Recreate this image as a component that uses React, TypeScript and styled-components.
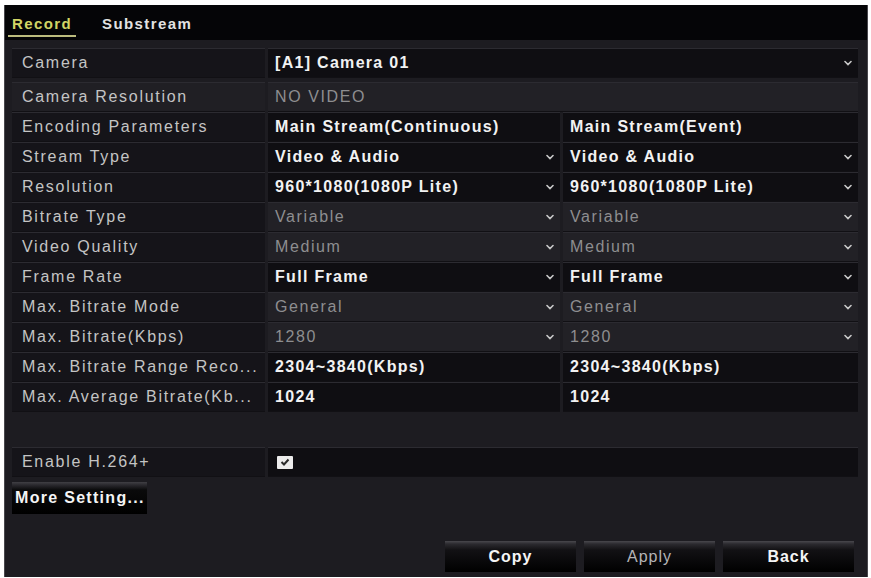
import React from "react";
import styled, { createGlobalStyle } from "styled-components";

const GlobalStyle = createGlobalStyle`
  html, body {
    margin: 0;
    padding: 0;
    background: #ffffff;
  }
  body {
    font-family: "Liberation Sans", Arial, sans-serif;
  }
`;

type Value = { text: string; dropdown?: boolean; muted?: boolean; bold?: boolean };
type Row = { label: string; values: Value[]; span?: boolean; dim?: boolean };

const rows: Row[] = [
  { label: "Camera Resolution", values: [{ text: "NO VIDEO", muted: true }], span: true, dim: true },
  {
    label: "Encoding Parameters",
    values: [{ text: "Main Stream(Continuous)", bold: true }, { text: "Main Stream(Event)", bold: true }],
  },
  {
    label: "Stream Type",
    values: [
      { text: "Video & Audio", bold: true, dropdown: true },
      { text: "Video & Audio", bold: true, dropdown: true },
    ],
  },
  {
    label: "Resolution",
    values: [
      { text: "960*1080(1080P Lite)", bold: true, dropdown: true },
      { text: "960*1080(1080P Lite)", bold: true, dropdown: true },
    ],
  },
  {
    label: "Bitrate Type",
    values: [
      { text: "Variable", muted: true, dropdown: true },
      { text: "Variable", muted: true, dropdown: true },
    ],
  },
  {
    label: "Video Quality",
    values: [
      { text: "Medium", muted: true, dropdown: true },
      { text: "Medium", muted: true, dropdown: true },
    ],
  },
  {
    label: "Frame Rate",
    values: [
      { text: "Full Frame", bold: true, dropdown: true },
      { text: "Full Frame", bold: true, dropdown: true },
    ],
  },
  {
    label: "Max. Bitrate Mode",
    values: [
      { text: "General", muted: true, dropdown: true },
      { text: "General", muted: true, dropdown: true },
    ],
  },
  {
    label: "Max. Bitrate(Kbps)",
    values: [
      { text: "1280", muted: true, dropdown: true },
      { text: "1280", muted: true, dropdown: true },
    ],
  },
  {
    label: "Max. Bitrate Range Reco...",
    values: [{ text: "2304~3840(Kbps)", bold: true }, { text: "2304~3840(Kbps)", bold: true }],
  },
  {
    label: "Max. Average Bitrate(Kb...",
    values: [{ text: "1024", bold: true }, { text: "1024", bold: true }],
  },
];

const Panel = styled.div`
  box-sizing: border-box;
  margin: 5px 4px 0 4px;
  width: 864px;
  height: 572px;
  background: #1d1c21;
  border-left: 1px solid #48474c;
  border-right: 1px solid #48474c;
  display: flex;
  flex-direction: column;
`;

const TabBar = styled.div`
  height: 35px;
  background: #050507;
  display: flex;
  align-items: flex-start;
  gap: 22px;
  padding-left: 3px;
`;

const Tab = styled.div<{ $active?: boolean }>`
  padding: 11px 4px 3px 4px;
  line-height: 16px;
  font-size: 15px;
  font-weight: bold;
  letter-spacing: 1.4px;
  color: ${(p) => (p.$active ? "#d2d565" : "#e2e2e2")};
  border-bottom: 2px solid ${(p) => (p.$active ? "#bcbc7e" : "transparent")};
`;

const Content = styled.div`
  flex: 1;
  display: flex;
  flex-direction: column;
  padding: 8px 8px 5px 7px;
`;

const Table = styled.div`
  display: flex;
  flex-direction: column;
`;

const GridRow = styled.div<{ $gapBefore?: number; $gapAfter?: number }>`
  display: grid;
  grid-template-columns: 253px 292px 295px;
  column-gap: 3px;
  height: 30px;
  margin-top: ${(p) => p.$gapBefore ?? 0}px;
  margin-bottom: ${(p) => p.$gapAfter ?? 0}px;
`;

const LabelCell = styled.div<{ $dim?: boolean }>`
  box-sizing: border-box;
  display: flex;
  align-items: center;
  padding-left: 10px;
  background: ${(p) => (p.$dim ? "#201f24" : "#151419")};
  border-top: 1px solid #2c2b31;
  border-bottom: 1px solid #111014;
  font-size: 16px;
  letter-spacing: 1.7px;
  color: #c4c4c4;
  white-space: nowrap;
  overflow: hidden;
`;

const ValueCell = styled.div<{ $muted?: boolean; $span?: boolean }>`
  box-sizing: border-box;
  display: flex;
  align-items: center;
  justify-content: space-between;
  padding: 0 6px 0 7px;
  grid-column: ${(p) => (p.$span ? "2 / 4" : "auto")};
  background: ${(p) => (p.$muted ? "#222126" : "#0f0e12")};
  border-top: 1px solid #2c2b31;
  border-bottom: 1px solid #111014;
  white-space: nowrap;
  overflow: hidden;
`;

const ValueText = styled.span<{ $muted?: boolean; $bold?: boolean }>`
  font-size: 16px;
  letter-spacing: ${(p) => (p.$bold ? "1.3px" : "1.6px")};
  font-weight: ${(p) => (p.$bold ? "bold" : "normal")};
  color: ${(p) => (p.$muted ? "#8e8e90" : "#f2f2f2")};
`;

const Chevron = styled.svg`
  width: 8px;
  height: 6px;
  flex: none;
`;

const CheckBox = styled.div`
  width: 16px;
  height: 13px;
  margin-left: 2px;
  background: #ececec;
  border-radius: 1px;
  display: flex;
  align-items: center;
  justify-content: center;
`;

const MoreButton = styled.div`
  margin-top: 5px;
  width: 135px;
  height: 32px;
  box-sizing: border-box;
  padding-left: 3px;
  display: flex;
  align-items: center;
  background: linear-gradient(#403f44 0, #2a292e 3px, #0a0a0b 8px, #000 100%);
  font-size: 16px;
  font-weight: bold;
  letter-spacing: 1.3px;
  color: #f4f4f4;
  white-space: nowrap;
`;

const Footer = styled.div`
  margin-top: auto;
  display: flex;
  justify-content: flex-end;
  gap: 8px;
  padding-right: 5px;
`;

const FooterButton = styled.div<{ $disabled?: boolean }>`
  width: 131px;
  height: 31px;
  display: flex;
  align-items: center;
  justify-content: center;
  background: linear-gradient(#49484d 0, #2b2a2f 3px, #121114 9px, #000 100%);
  font-size: 16px;
  font-weight: ${(p) => (p.$disabled ? "normal" : "bold")};
  letter-spacing: 1px;
  color: ${(p) => (p.$disabled ? "#b4b4b6" : "#f4f4f4")};
`;

const DropArrow = () => (
  <Chevron viewBox="0 0 8 6">
    <path d="M1 1.5 L4 4.5 L7 1.5" fill="none" stroke="#c8c8c8" strokeWidth="1.6" strokeLinecap="round" />
  </Chevron>
);

const App = () => {
  return (
    <>
      <GlobalStyle />
      <Panel>
        <TabBar>
          <Tab $active>Record</Tab>
          <Tab>Substream</Tab>
        </TabBar>
        <Content>
          <Table>
            <GridRow $gapAfter={4}>
              <LabelCell>Camera</LabelCell>
              <ValueCell $span>
                <ValueText $bold>[A1] Camera 01</ValueText>
                <DropArrow />
              </ValueCell>
            </GridRow>
            {rows.map((row) => (
              <GridRow key={row.label}>
                <LabelCell $dim={row.dim}>{row.label}</LabelCell>
                {row.values.map((v, i) => (
                  <ValueCell key={i} $span={row.span} $muted={v.muted}>
                    <ValueText $muted={v.muted} $bold={v.bold}>
                      {v.text}
                    </ValueText>
                    {v.dropdown && <DropArrow />}
                  </ValueCell>
                ))}
              </GridRow>
            ))}
            <GridRow $gapBefore={35}>
              <LabelCell>Enable H.264+</LabelCell>
              <ValueCell $span>
                <CheckBox>
                  <svg width="10" height="8" viewBox="0 0 10 8">
                    <path d="M1.5 4 L4 6.5 L8.5 1.5" fill="none" stroke="#2a2a2a" strokeWidth="2" />
                  </svg>
                </CheckBox>
              </ValueCell>
            </GridRow>
          </Table>
          <MoreButton>More Setting...</MoreButton>
          <Footer>
            <FooterButton>Copy</FooterButton>
            <FooterButton $disabled>Apply</FooterButton>
            <FooterButton>Back</FooterButton>
          </Footer>
        </Content>
      </Panel>
    </>
  );
};

export default App;
